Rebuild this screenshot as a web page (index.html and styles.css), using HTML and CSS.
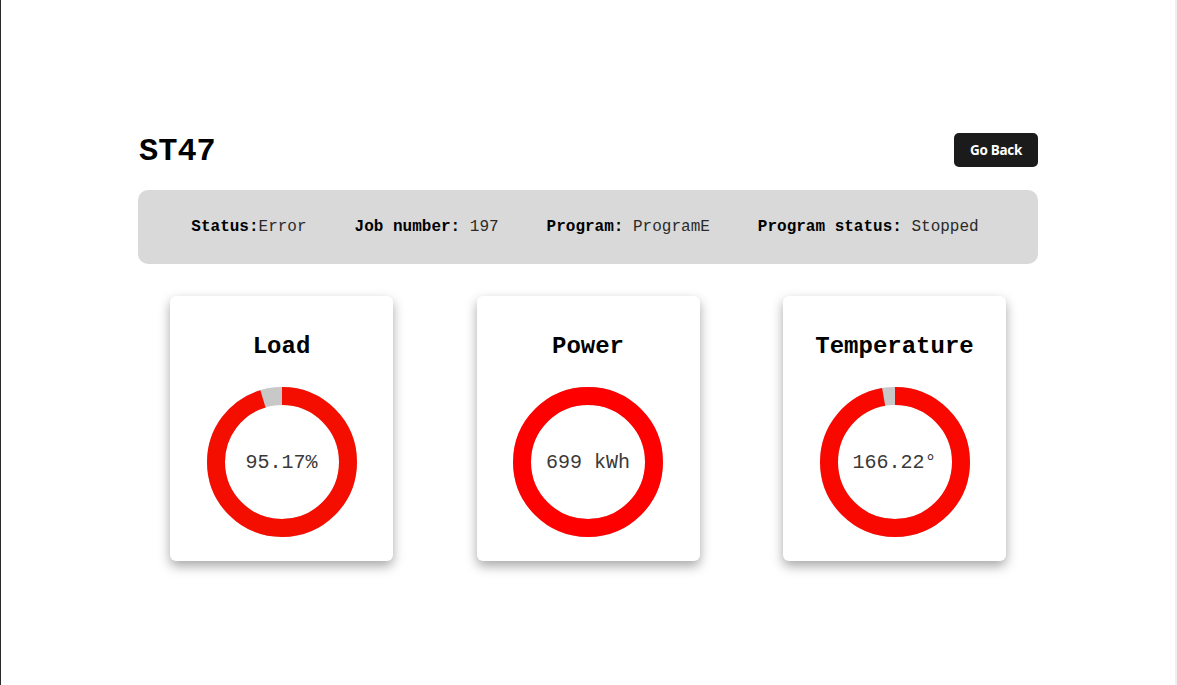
FILE: index.html
```html
<!DOCTYPE html>
<html lang="en">
<head>
<meta charset="utf-8">
<title>ST47</title>
<link rel="stylesheet" href="styles.css">
</head>
<body>
<main class="page">
  <header class="header">
    <h1 class="title">ST47</h1>
    <button class="back-btn">Go Back</button>
  </header>
  <section class="info-bar">
    <div class="info-item"><span class="label">Status:</span><span class="value">Error</span></div>
    <div class="info-item"><span class="label">Job number: </span><span class="value">197</span></div>
    <div class="info-item"><span class="label">Program: </span><span class="value">ProgramE</span></div>
    <div class="info-item"><span class="label">Program status: </span><span class="value">Stopped</span></div>
  </section>
  <section class="cards">
    <div class="card">
      <h2 class="card-title">Load</h2>
      <div class="donut">
        <svg class="donut-svg" width="150" height="150" viewBox="0 0 150 150">
          <circle class="ring-bg" cx="75" cy="75" r="66"></circle>
          <circle class="ring-fg" cx="75" cy="75" r="66" style="stroke: rgb(244,14,0); stroke-dasharray: 394.66 414.69;"></circle>
        </svg>
        <div class="donut-value">95.17%</div>
      </div>
    </div>
    <div class="card">
      <h2 class="card-title">Power</h2>
      <div class="donut">
        <svg class="donut-svg" width="150" height="150" viewBox="0 0 150 150">
          <circle class="ring-bg" cx="75" cy="75" r="66"></circle>
          <circle class="ring-fg" cx="75" cy="75" r="66" style="stroke: rgb(255,0,0); stroke-dasharray: 414.69 414.69;"></circle>
        </svg>
        <div class="donut-value">699 kWh</div>
      </div>
    </div>
    <div class="card">
      <h2 class="card-title">Temperature</h2>
      <div class="donut">
        <svg class="donut-svg" width="150" height="150" viewBox="0 0 150 150">
          <circle class="ring-bg" cx="75" cy="75" r="66"></circle>
          <circle class="ring-fg" cx="75" cy="75" r="66" style="stroke: rgb(249,8,0); stroke-dasharray: 402.6 414.69;"></circle>
        </svg>
        <div class="donut-value">166.22°</div>
      </div>
    </div>
  </section>
</main>
</body>
</html>
```

FILE: styles.css
```css
* { box-sizing: border-box; }

html, body {
  margin: 0;
  padding: 0;
}

body {
  min-height: 100vh;
  background: #ffffff;
  border-left: 1px solid #2a2a2a;
  border-right: 2px solid #efefef;
  font-family: "Liberation Mono", "Courier New", monospace;
  color: #000;
}

.page {
  width: 900px;
  margin: 0 auto;
  padding-top: 133px;
}

.header {
  display: flex;
  justify-content: space-between;
  align-items: center;
  height: 34px;
}

.title {
  margin: 0 0 0 1px;
  padding-top: 4px;
  font-size: 32px;
  font-weight: 700;
  line-height: 34px;
}

.back-btn {
  height: 34px;
  padding: 0 16px;
  border: none;
  border-radius: 5px;
  background: #1b1b1b;
  color: #fff;
  font-family: "Open Sans", "Noto Sans", sans-serif;
  font-weight: 700;
  font-size: 13.5px;
  letter-spacing: -0.3px;
  cursor: pointer;
}

.info-bar {
  margin-top: 23px;
  height: 74px;
  background: #d9d9d9;
  border-radius: 10px;
  display: flex;
  justify-content: center;
  align-items: center;
  gap: 48px;
  padding-right: 6px;
  font-size: 16px;
  white-space: pre;
}

.label {
  font-weight: 700;
  color: #000;
}

.value {
  color: #2a2a2a;
}

.cards {
  margin-top: 32px;
  padding: 0 32px;
  display: flex;
  justify-content: space-between;
}

.card {
  width: 223px;
  height: 265px;
  background: #fff;
  border-radius: 6px;
  box-shadow: 0 5px 12px rgba(0, 0, 0, 0.35);
  display: flex;
  flex-direction: column;
  align-items: center;
  padding-top: 37px;
}

.card-title {
  margin: 0;
  font-size: 24px;
  line-height: 28px;
  font-weight: 700;
}

.donut {
  margin-top: 26px;
  width: 150px;
  height: 150px;
  display: grid;
  place-items: center;
}

.donut-svg,
.donut-value {
  grid-area: 1 / 1;
}

.donut-svg {
  transform: rotate(-90deg);
}

.ring-bg {
  fill: none;
  stroke: #c8c8c8;
  stroke-width: 18;
}

.ring-fg {
  fill: none;
  stroke-width: 18;
}

.donut-value {
  font-size: 20px;
  color: #3a3a3a;
}
```
